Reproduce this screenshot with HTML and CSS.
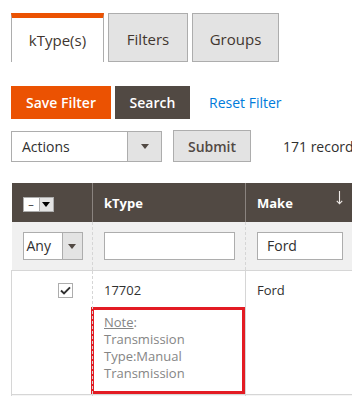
FILE: index.html
```html
<!DOCTYPE html>
<html lang="en">
<head>
  <meta charset="UTF-8" />
  <title>kTypes</title>
  <link rel="stylesheet" href="styles.css">
</head>
<body>
  <ul class="tabs">
    <li class="tab active">kType(s)</li>
    <li class="tab">Filters</li>
    <li class="tab">Groups</li>
  </ul>

  <div class="toolbar">
    <button class="btn btn-primary">Save Filter</button>
    <button class="btn btn-dark">Search</button>
    <a class="link" href="#">Reset Filter</a>
  </div>

  <div class="massactions">
    <div class="select">
      <span class="select-label">Actions</span>
      <span class="select-arrow"><i class="caret"></i></span>
    </div>
    <button class="btn btn-light">Submit</button>
    <span class="records">171 records found</span>
  </div>

  <table class="grid">
    <thead>
      <tr class="head">
        <th class="col-check">
          <span class="mass-select"><span class="mass-dash">–</span><span class="mass-arrow"><i class="caret black"></i></span></span>
        </th>
        <th class="col-ktype">kType</th>
        <th class="col-make">Make
          <svg class="sort" width="7" height="14" viewBox="0 0 7 14"><path d="M3.5 0 V12.5 M0.8 9.8 L3.5 12.8 L6.2 9.8" fill="none" stroke="#f0ece9" stroke-width="1.1"/></svg>
        </th>
        <th class="col-model"></th>
      </tr>
      <tr class="filters">
        <td class="col-check">
          <div class="select small">
            <span class="select-label">Any</span>
            <span class="select-arrow"><i class="caret"></i></span>
          </div>
        </td>
        <td class="col-ktype"><input class="input" type="text" value=""></td>
        <td class="col-make"><input class="input" type="text" value="Ford"></td>
        <td class="col-model"></td>
      </tr>
    </thead>
    <tbody>
      <tr class="row">
        <td class="col-check cell-check"><span class="checkbox">
          <svg width="11" height="9" viewBox="0 0 11 9"><path d="M1 4.6 L4 7.4 L10 1.4" fill="none" stroke="#303030" stroke-width="2"/></svg>
        </span></td>
        <td class="col-ktype">
          17702
          <div class="note">
            <u>Note</u>:<br>Transmission<br>Type:Manual<br>Transmission
          </div>
        </td>
        <td class="col-make">Ford</td>
        <td class="col-model"></td>
      </tr>
      <tr class="row alt">
        <td class="col-check"></td>
        <td class="col-ktype"></td>
        <td class="col-make"></td>
        <td class="col-model"></td>
      </tr>
    </tbody>
  </table>
</body>
</html>
```

FILE: styles.css
```css
html, body {
  margin: 0; padding: 0;
  overflow: hidden;
  background: #fff;
  font-family: 'Open Sans', 'Liberation Sans', sans-serif;
  color: #303030;
}
body {
  padding: 13px 0 0 11px;
  width: 600px;
}

/* tabs */
.tabs {
  list-style: none; margin: 0; padding: 0;
  display: flex; gap: 4px;
  height: 49px;
}
.tab {
  box-sizing: border-box;
  height: 49px;
  display: flex; align-items: center; justify-content: center;
  background: #e3e3e3;
  border: 1px solid #adadad;
  color: #41362f;
  font-size: 15px;
  padding-top: 2px;
}
.tab:nth-child(1) { width: 93px; }
.tab:nth-child(2) { width: 80px; }
.tab:nth-child(3) { width: 87px; }
.tab.active {
  background: #fff;
  border-top: 5px solid #eb5202;
  border-bottom: none;
  padding-top: 0;
}

/* buttons */
.toolbar {
  display: flex; align-items: center; gap: 4px;
  margin-top: 24px;
}
.btn {
  box-sizing: border-box;
  font-family: 'Open Sans', 'Liberation Sans', sans-serif;
  font-size: 14px; font-weight: 600;
  border: 1px solid transparent;
  cursor: pointer;
}
.btn-primary {
  background: #eb5202; color: #fff;
  width: 100px; height: 33px;
}
.btn-dark {
  background: #514943; color: #fff;
  width: 75px; height: 33px;
}
.link {
  color: #007bdb; text-decoration: none;
  font-size: 14px;
  margin-left: 15px;
}

.massactions {
  display: flex; align-items: center;
  margin-top: 11px;
}
.select {
  box-sizing: border-box;
  display: flex;
  width: 151px; height: 31px;
  border: 1px solid #adadad;
  background: #fff;
  font-size: 14px;
}
.select-label {
  flex: 1;
  display: flex; align-items: center;
  padding-left: 10px;
}
.select-arrow {
  width: 33px;
  border-left: 1px solid #adadad;
  background: #e3e3e3;
  display: flex; align-items: center; justify-content: center;
}
.caret {
  width: 0; height: 0;
  border-left: 4px solid transparent;
  border-right: 4px solid transparent;
  border-top: 5px solid #514943;
  margin-top: 1px;
}
.caret.black { border-top-color: #000; }
.btn-light {
  background: #e3e3e3; color: #514943;
  border-color: #adadad;
  width: 78px; height: 32px;
  margin-left: 11px;
}
.records {
  margin-left: 32px;
  font-size: 14px;
  white-space: nowrap;
}

/* grid */
.grid {
  margin-top: 21px;
  border-collapse: collapse;
  table-layout: fixed;
  width: 441px;
  font-size: 13px;
}
.col-check { width: 81px; }
.col-ktype { width: 153px; }
.col-make { width: 107px; }
.col-model { width: 100px; }
.head th {
  background: #514943; color: #fff;
  height: 39px; box-sizing: border-box;
  text-align: left;
  font-size: 13px; font-weight: 700;
  padding: 0 11px;
  border-left: 1px solid #8a837f;
}
.head th:first-child { border-left: none; }
.sort {
  float: right;
  margin-right: -2px;
  margin-top: -3px;
}
.mass-select {
  display: inline-flex;
  height: 15px;
  border: 1px solid #adadad;
  box-sizing: border-box;
  width: 31px;
  vertical-align: middle;
}
.mass-dash {
  width: 15px; background: #fff; color: #303030;
  font-size: 11px; line-height: 12px; text-align: center;
  font-weight: 400;
}
.mass-arrow {
  flex: 1; background: #e3e3e3;
  border-left: 1px solid #adadad;
  display: flex; align-items: center; justify-content: center;
}
.filters td {
  background: #f0f0f0;
  height: 48px; box-sizing: border-box;
  padding: 0 10px 0 11px;
  border-left: 1px dashed #d6d6d6;
}
.filters td:first-child { border-left: none; }
.select.small { width: 60px; height: 28px; font-size: 14px; }
.select.small .select-label { padding-left: 3px; }
.select.small .select-arrow { width: 19px; }
.input {
  box-sizing: border-box;
  width: 100%; height: 28px;
  border: 1px solid #adadad;
  font-family: 'Open Sans', 'Liberation Sans', sans-serif;
  font-size: 14px; color: #303030;
  padding: 0 9px;
  margin: 0;
}
.filters .col-make .input { width: 86px; }
.row td {
  vertical-align: top;
  border-top: 1px solid #d6d6d6;
  border-left: 1px dashed #d6d6d6;
  padding: 10px 11px 0;
  line-height: 18px;
  height: 122px; box-sizing: border-box;
}
.row td:first-child { border-left: 1px solid #d6d6d6; }
.row td.col-make { border-left: 1px solid #d6d6d6; }
.row.alt td { background: #f5f5f5; height: 20px; }
.cell-check { text-align: right; padding-right: 19px !important; }
.checkbox {
  display: inline-flex; align-items: center; justify-content: center;
  width: 15px; height: 15px; box-sizing: border-box;
  border: 1px solid #adadad;
  margin-top: 2px;
}
.note {
  margin: 8px -11px 0 -13px;
  border: 3px solid #e31b23;
  padding: 4px 10px 9px;
  color: #858585;
  line-height: 17px;
}
.note u { text-decoration-color: #858585; }
```
